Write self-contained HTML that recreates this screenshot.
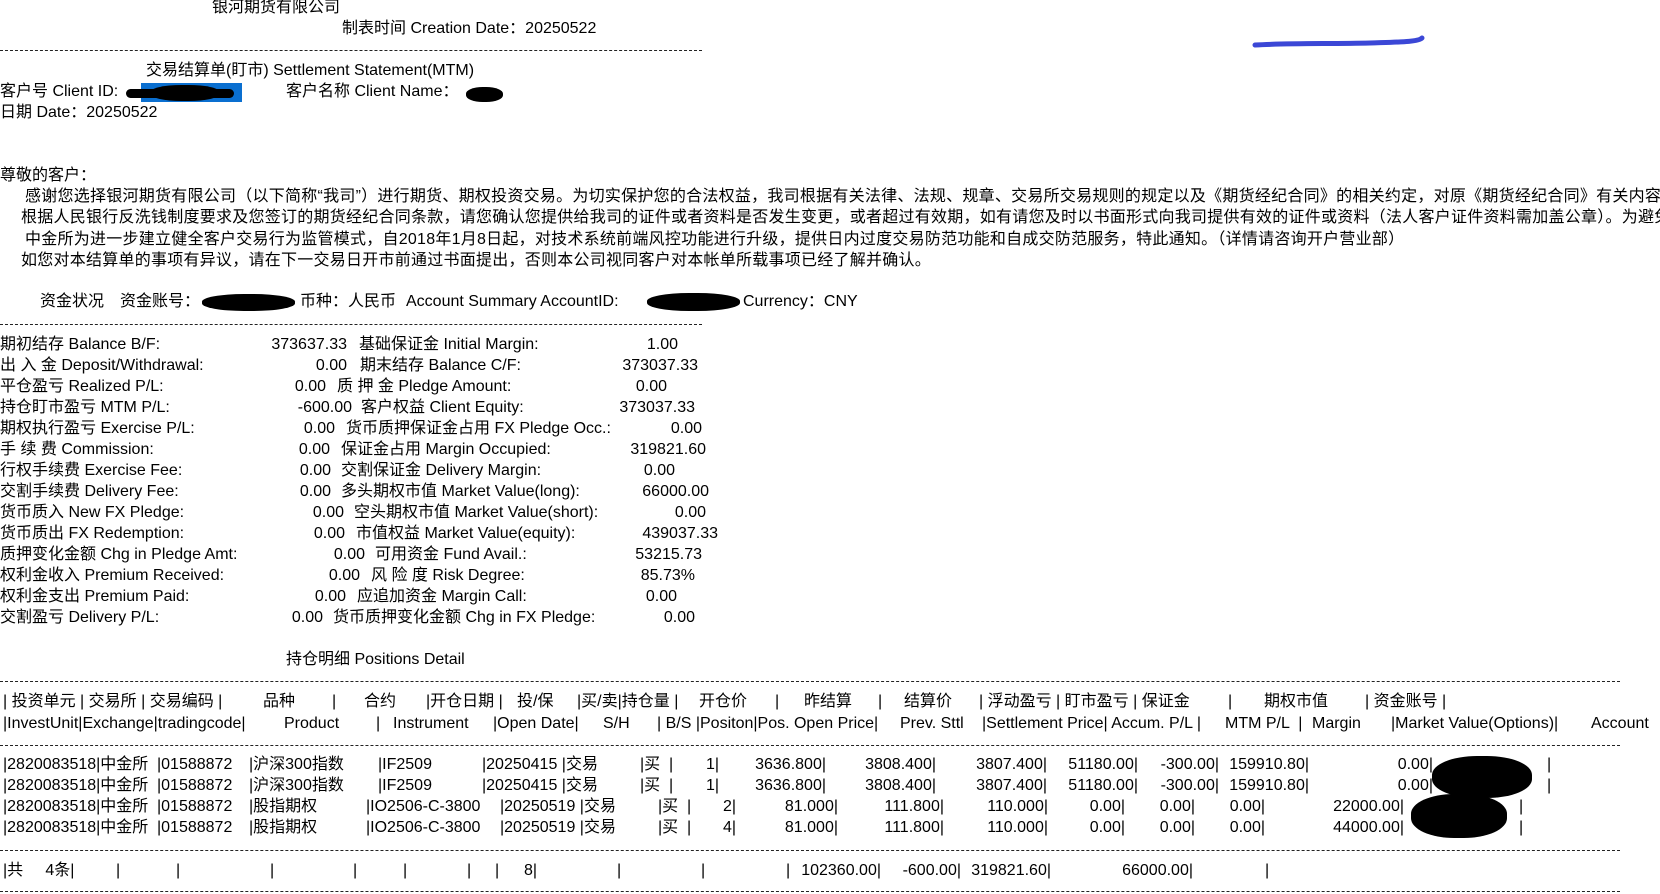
<!DOCTYPE html>
<html><head><meta charset="utf-8">
<style>
html,body{margin:0;padding:0;}
body{width:1660px;height:894px;overflow:hidden;background:#fff;position:relative;font-family:"Liberation Sans","Noto Sans CJK SC",sans-serif;font-size:16px;color:#000;}
.t{position:absolute;white-space:pre;line-height:20px;}
.p{letter-spacing:0.25px;}
.dash{position:absolute;left:0;height:0;border-top:1px dashed #222;}
.blob{position:absolute;background:#000;border-radius:45%;}
</style></head><body>

<div class="t" style="left:212px;top:-2px">银河期货有限公司</div>
<div class="t" style="left:342px;top:19px">制表时间 Creation Date：20250522</div>
<div class="dash" style="top:50px;width:702px"></div>
<div class="t" style="left:146px;top:61px">交易结算单(盯市) Settlement Statement(MTM)</div>
<div class="t" style="left:0;top:82px">客户号 Client ID:</div>
<div style="position:absolute;left:141px;top:83px;width:101px;height:19px;background:#0a6fd0"></div>
<div class="blob" style="left:126px;top:89px;width:108px;height:9px;border-radius:6px"></div>
<div class="blob" style="left:150px;top:85px;width:70px;height:16px"></div>
<div class="t" style="left:286px;top:82px">客户名称 Client Name：</div>
<div class="blob" style="left:466px;top:87px;width:37px;height:15px"></div>
<div class="t" style="left:0;top:103px">日期 Date：20250522</div>

<svg style="position:absolute;left:1250px;top:34px" width="180" height="16"><path d="M5 11 C40 9 80 10 120 9 C150 8 168 8 172 4" stroke="#3b47d6" stroke-width="5" fill="none" stroke-linecap="round"/></svg>

<div class="t" style="left:0;top:166px">尊敬的客户：</div>
<div class="t p" style="left:25px;top:187px">感谢您选择银河期货有限公司（以下简称“我司”）进行期货、期权投资交易。为切实保护您的合法权益，我司根据有关法律、法规、规章、交易所交易规则的规定以及《期货经纪合同》的相关约定，对原《期货经纪合同》有关内容</div>
<div class="t p" style="left:21px;top:208px">根据人民银行反洗钱制度要求及您签订的期货经纪合同条款，请您确认您提供给我司的证件或者资料是否发生变更，或者超过有效期，如有请您及时以书面形式向我司提供有效的证件或资料（法人客户证件资料需加盖公章）。为避免</div>
<div class="t p" style="left:25px;top:230px">中金所为进一步建立健全客户交易行为监管模式，自2018年1月8日起，对技术系统前端风控功能进行升级，提供日内过度交易防范功能和自成交防范服务，特此通知。（详情请咨询开户营业部）</div>
<div class="t p" style="left:21px;top:251px">如您对本结算单的事项有异议，请在下一交易日开市前通过书面提出，否则本公司视同客户对本帐单所载事项已经了解并确认。</div>

<div class="t" style="left:40px;top:292px">资金状况</div>
<div class="t" style="left:120px;top:292px">资金账号：</div>
<div class="blob" style="left:202px;top:294px;width:93px;height:17px"></div>
<div class="t" style="left:300px;top:292px">币种：人民币</div>
<div class="t" style="left:406px;top:292px">Account Summary AccountID:</div>
<div class="blob" style="left:647px;top:293px;width:93px;height:18px"></div>
<div class="t" style="left:743px;top:292px">Currency：CNY</div>
<div class="dash" style="top:324px;width:702px"></div>

<!-- summary -->
<div class="t" style="left:0;top:335px">期初结存 Balance B/F:</div><div class="t" style="right:1313px;top:335px">373637.33</div><div class="t" style="left:359px;top:335px">基础保证金 Initial Margin:</div><div class="t" style="right:982px;top:335px">1.00</div>
<div class="t" style="left:0;top:356px">出 入 金 Deposit/Withdrawal:</div><div class="t" style="right:1313px;top:356px">0.00</div><div class="t" style="left:360px;top:356px">期末结存 Balance C/F:</div><div class="t" style="right:962px;top:356px">373037.33</div>
<div class="t" style="left:0;top:377px">平仓盈亏 Realized P/L:</div><div class="t" style="right:1334px;top:377px">0.00</div><div class="t" style="left:337px;top:377px">质 押 金 Pledge Amount:</div><div class="t" style="right:993px;top:377px">0.00</div>
<div class="t" style="left:0;top:398px">持仓盯市盈亏 MTM P/L:</div><div class="t" style="right:1308px;top:398px">-600.00</div><div class="t" style="left:361px;top:398px">客户权益 Client Equity:</div><div class="t" style="right:965px;top:398px">373037.33</div>
<div class="t" style="left:0;top:419px">期权执行盈亏 Exercise P/L:</div><div class="t" style="right:1325px;top:419px">0.00</div><div class="t" style="left:346px;top:419px">货币质押保证金占用 FX Pledge Occ.:</div><div class="t" style="right:958px;top:419px">0.00</div>
<div class="t" style="left:0;top:440px">手 续 费 Commission:</div><div class="t" style="right:1330px;top:440px">0.00</div><div class="t" style="left:341px;top:440px">保证金占用 Margin Occupied:</div><div class="t" style="right:954px;top:440px">319821.60</div>
<div class="t" style="left:0;top:461px">行权手续费 Exercise Fee:</div><div class="t" style="right:1329px;top:461px">0.00</div><div class="t" style="left:341px;top:461px">交割保证金 Delivery Margin:</div><div class="t" style="right:985px;top:461px">0.00</div>
<div class="t" style="left:0;top:482px">交割手续费 Delivery Fee:</div><div class="t" style="right:1329px;top:482px">0.00</div><div class="t" style="left:341px;top:482px">多头期权市值 Market Value(long):</div><div class="t" style="right:951px;top:482px">66000.00</div>
<div class="t" style="left:0;top:503px">货币质入 New FX Pledge:</div><div class="t" style="right:1316px;top:503px">0.00</div><div class="t" style="left:354px;top:503px">空头期权市值 Market Value(short):</div><div class="t" style="right:954px;top:503px">0.00</div>
<div class="t" style="left:0;top:524px">货币质出 FX Redemption:</div><div class="t" style="right:1315px;top:524px">0.00</div><div class="t" style="left:356px;top:524px">市值权益 Market Value(equity):</div><div class="t" style="right:942px;top:524px">439037.33</div>
<div class="t" style="left:0;top:545px">质押变化金额 Chg in Pledge Amt:</div><div class="t" style="right:1295px;top:545px">0.00</div><div class="t" style="left:375px;top:545px">可用资金 Fund Avail.:</div><div class="t" style="right:958px;top:545px">53215.73</div>
<div class="t" style="left:0;top:566px">权利金收入 Premium Received:</div><div class="t" style="right:1300px;top:566px">0.00</div><div class="t" style="left:371px;top:566px">风 险 度 Risk Degree:</div><div class="t" style="right:965px;top:566px">85.73%</div>
<div class="t" style="left:0;top:587px">权利金支出 Premium Paid:</div><div class="t" style="right:1314px;top:587px">0.00</div><div class="t" style="left:357px;top:587px">应追加资金 Margin Call:</div><div class="t" style="right:983px;top:587px">0.00</div>
<div class="t" style="left:0;top:608px">交割盈亏 Delivery P/L:</div><div class="t" style="right:1337px;top:608px">0.00</div><div class="t" style="left:333px;top:608px">货币质押变化金额 Chg in FX Pledge:</div><div class="t" style="right:965px;top:608px">0.00</div>

<div class="t" style="left:286px;top:650px">持仓明细 Positions Detail</div>
<div class="dash" style="top:681px;width:1620px"></div>

<!-- header row 1 -->
<div class="t" style="left:3px;top:692px">| 投资单元 | 交易所 | 交易编码 |</div>
<div class="t" style="left:263px;top:692px">品种</div>
<div class="t" style="left:332px;top:692px">|</div>
<div class="t" style="left:364px;top:692px">合约</div>
<div class="t" style="left:426px;top:692px">|开仓日期 |</div>
<div class="t" style="left:517px;top:692px">投/保</div>
<div class="t" style="left:577px;top:692px">|买/卖|持仓量 |</div>
<div class="t" style="left:699px;top:692px">开仓价</div>
<div class="t" style="left:775px;top:692px">|</div>
<div class="t" style="left:804px;top:692px">昨结算</div>
<div class="t" style="left:878px;top:692px">|</div>
<div class="t" style="left:904px;top:692px">结算价</div>
<div class="t" style="left:979px;top:692px">| 浮动盈亏 | 盯市盈亏 | 保证金</div>
<div class="t" style="left:1228px;top:692px">|</div>
<div class="t" style="left:1264px;top:692px">期权市值</div>
<div class="t" style="left:1365px;top:692px">| 资金账号 |</div>

<!-- header row 2 -->
<div class="t" style="left:3px;top:714px">|InvestUnit|Exchange|tradingcode|</div>
<div class="t" style="left:284px;top:714px">Product</div>
<div class="t" style="left:376px;top:714px">|</div>
<div class="t" style="left:393px;top:714px">Instrument</div>
<div class="t" style="left:493px;top:714px">|Open Date|</div>
<div class="t" style="left:603px;top:714px">S/H</div>
<div class="t" style="left:657px;top:714px">| B/S |Positon|Pos. Open Price|</div>
<div class="t" style="left:900px;top:714px">Prev. Sttl</div>
<div class="t" style="left:982px;top:714px">|Settlement Price| Accum. P/L |</div>
<div class="t" style="left:1225px;top:714px">MTM P/L  |</div>
<div class="t" style="left:1312px;top:714px">Margin</div>
<div class="t" style="left:1391px;top:714px">|Market Value(Options)|</div>
<div class="t" style="left:1591px;top:714px">Account</div>
<div class="dash" style="top:745px;width:1620px"></div>

<!-- data rows -->
<div class="t" style="left:3px;top:755px">|2820083518|中金所</div><div class="t" style="left:157px;top:755px">|01588872</div><div class="t" style="left:249px;top:755px">|沪深300指数</div><div class="t" style="left:378px;top:755px">|IF2509</div><div class="t" style="left:482px;top:755px">|20250415 |交易</div><div class="t" style="left:640px;top:755px">|买  |</div>
<div class="t" style="right:941px;top:755px">1|</div><div class="t" style="right:834px;top:755px">3636.800|</div><div class="t" style="right:724px;top:755px">3808.400|</div><div class="t" style="right:613px;top:755px">3807.400|</div><div class="t" style="right:522px;top:755px">51180.00|</div><div class="t" style="right:441px;top:755px">-300.00|</div><div class="t" style="right:351px;top:755px">159910.80|</div><div class="t" style="right:227px;top:755px">0.00|</div><div class="t" style="left:1547px;top:755px">|</div>

<div class="t" style="left:3px;top:776px">|2820083518|中金所</div><div class="t" style="left:157px;top:776px">|01588872</div><div class="t" style="left:249px;top:776px">|沪深300指数</div><div class="t" style="left:378px;top:776px">|IF2509</div><div class="t" style="left:482px;top:776px">|20250415 |交易</div><div class="t" style="left:640px;top:776px">|买  |</div>
<div class="t" style="right:941px;top:776px">1|</div><div class="t" style="right:834px;top:776px">3636.800|</div><div class="t" style="right:724px;top:776px">3808.400|</div><div class="t" style="right:613px;top:776px">3807.400|</div><div class="t" style="right:522px;top:776px">51180.00|</div><div class="t" style="right:441px;top:776px">-300.00|</div><div class="t" style="right:351px;top:776px">159910.80|</div><div class="t" style="right:227px;top:776px">0.00|</div><div class="t" style="left:1547px;top:776px">|</div>

<div class="t" style="left:3px;top:797px">|2820083518|中金所</div><div class="t" style="left:157px;top:797px">|01588872</div><div class="t" style="left:249px;top:797px">|股指期权</div><div class="t" style="left:366px;top:797px">|IO2506-C-3800</div><div class="t" style="left:500px;top:797px">|20250519 |交易</div><div class="t" style="left:658px;top:797px">|买  |</div>
<div class="t" style="right:924px;top:797px">2|</div><div class="t" style="right:822px;top:797px">81.000|</div><div class="t" style="right:716px;top:797px">111.800|</div><div class="t" style="right:612px;top:797px">110.000|</div><div class="t" style="right:535px;top:797px">0.00|</div><div class="t" style="right:465px;top:797px">0.00|</div><div class="t" style="right:395px;top:797px">0.00|</div><div class="t" style="right:256px;top:797px">22000.00|</div><div class="t" style="left:1519px;top:797px">|</div>

<div class="t" style="left:3px;top:818px">|2820083518|中金所</div><div class="t" style="left:157px;top:818px">|01588872</div><div class="t" style="left:249px;top:818px">|股指期权</div><div class="t" style="left:366px;top:818px">|IO2506-C-3800</div><div class="t" style="left:500px;top:818px">|20250519 |交易</div><div class="t" style="left:658px;top:818px">|买  |</div>
<div class="t" style="right:924px;top:818px">4|</div><div class="t" style="right:822px;top:818px">81.000|</div><div class="t" style="right:716px;top:818px">111.800|</div><div class="t" style="right:612px;top:818px">110.000|</div><div class="t" style="right:535px;top:818px">0.00|</div><div class="t" style="right:465px;top:818px">0.00|</div><div class="t" style="right:395px;top:818px">0.00|</div><div class="t" style="right:256px;top:818px">44000.00|</div><div class="t" style="left:1519px;top:818px">|</div>

<div class="blob" style="left:1432px;top:756px;width:100px;height:42px"></div>
<div class="blob" style="left:1411px;top:794px;width:96px;height:44px"></div>

<div class="dash" style="top:850px;width:1620px"></div>
<!-- total -->
<div class="t" style="left:3px;top:861px">|共     4条|</div>
<div class="t" style="left:116px;top:861px">|</div><div class="t" style="left:176px;top:861px">|</div><div class="t" style="left:270px;top:861px">|</div><div class="t" style="left:353px;top:861px">|</div><div class="t" style="left:403px;top:861px">|</div><div class="t" style="left:467px;top:861px">|</div><div class="t" style="left:495px;top:861px">|</div>
<div class="t" style="right:1123px;top:861px">8|</div>
<div class="t" style="left:617px;top:861px">|</div><div class="t" style="left:701px;top:861px">|</div><div class="t" style="left:786px;top:861px">|</div>
<div class="t" style="right:779px;top:861px">102360.00|</div><div class="t" style="right:699px;top:861px">-600.00|</div><div class="t" style="right:609px;top:861px">319821.60|</div><div class="t" style="right:467px;top:861px">66000.00|</div><div class="t" style="left:1265px;top:861px">|</div>
<div class="dash" style="top:891px;width:1620px"></div>
</body></html>
